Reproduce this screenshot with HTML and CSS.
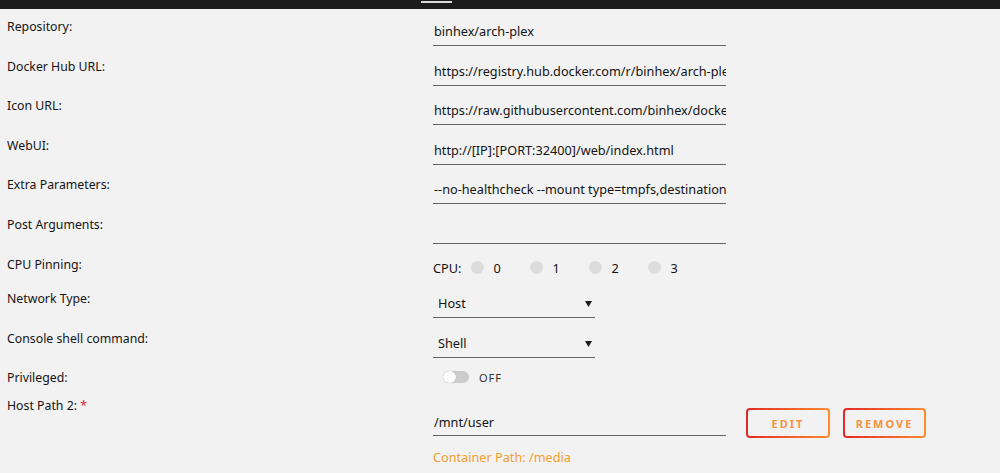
FILE: index.html
```html
<!DOCTYPE html>
<html lang="en">
  <head>
    <meta charset="UTF-8">
    <meta name="viewport" content="width=device-width, initial-scale=1.0">
    <title>Update Container</title>
    <link rel="stylesheet" href="styles.css">
  </head>
  <body>
    <div class="topbar"><span class="tab_mark"></span></div>

    <form class="settings">
      <div class="row">
        <div class="label">Repository:</div>
        <div class="field"><input class="text_input" type="text" value="binhex/arch-plex"></div>
      </div>
      <div class="row">
        <div class="label">Docker Hub URL:</div>
        <div class="field"><input class="text_input" type="text" value="https://registry.hub.docker.com/r/binhex/arch-plex/"></div>
      </div>
      <div class="row">
        <div class="label">Icon URL:</div>
        <div class="field"><input class="text_input" type="text" value="https://raw.githubusercontent.com/binhex/docker-templates/master/binhex/images/plex-icon.png"></div>
      </div>
      <div class="row">
        <div class="label">WebUI:</div>
        <div class="field"><input class="text_input" type="text" value="http://[IP]:[PORT:32400]/web/index.html"></div>
      </div>
      <div class="row">
        <div class="label">Extra Parameters:</div>
        <div class="field"><input class="text_input" type="text" value="--no-healthcheck --mount type=tmpfs,destination=/config/transcode"></div>
      </div>
      <div class="row">
        <div class="label">Post Arguments:</div>
        <div class="field"><input class="text_input" type="text" value=""></div>
      </div>
      <div class="row row_cpu">
        <div class="label">CPU Pinning:</div>
        <div class="field cpu_list">
          <span class="cpu_title">CPU:</span>
          <label class="cpu_opt"><span class="radio"></span>0</label>
          <label class="cpu_opt"><span class="radio"></span>1</label>
          <label class="cpu_opt"><span class="radio"></span>2</label>
          <label class="cpu_opt"><span class="radio"></span>3</label>
        </div>
      </div>
      <div class="row">
        <div class="label">Network Type:</div>
        <div class="field">
          <div class="select"><span>Host</span><svg width="7" height="7" viewBox="0 0 7 7"><path d="M0 1h7L3.5 7z" fill="#1c1c1c"/></svg></div>
        </div>
      </div>
      <div class="row">
        <div class="label">Console shell command:</div>
        <div class="field">
          <div class="select"><span>Shell</span><svg width="7" height="7" viewBox="0 0 7 7"><path d="M0 1h7L3.5 7z" fill="#1c1c1c"/></svg></div>
        </div>
      </div>
      <div class="row row_priv">
        <div class="label">Privileged:</div>
        <div class="field switch_line">
          <span class="switch"><span class="knob"></span></span>
          <span class="switch_text">OFF</span>
        </div>
      </div>
      <div class="row row_path">
        <div class="label">Host Path 2: <span class="required">*</span></div>
        <div class="field">
          <div class="path_line">
            <input class="text_input" type="text" value="/mnt/user">
            <button type="button" class="grad_btn btn_edit">EDIT</button>
            <button type="button" class="grad_btn btn_remove">REMOVE</button>
          </div>
          <div class="path_note">Container Path: /media</div>
        </div>
      </div>
    </form>
  </body>
</html>
```

FILE: styles.css
```css
html, body {
    margin: 0;
    padding: 0;
}
body {
    background: #f2f2f2;
    color: #141414;
    font-family: "Noto Sans", "Open Sans", sans-serif;
    font-size: 12.3px;
    overflow: hidden;
}
.topbar {
    height: 9px;
    background: #1c1c1c;
    position: relative;
}
.tab_mark {
    position: absolute;
    left: 421px;
    top: 1px;
    width: 31px;
    height: 2px;
    background: #d8d8d8;
}
.settings {
    padding-left: 7px;
}
.row {
    display: grid;
    grid-template-columns: 426px 1fr;
    height: 39.6px;
}
.row_cpu {
    height: 34.4px;
}
.row_priv {
    height: 28px;
}
.row_path {
    height: auto;
}
.label {
    padding-top: 9px;
    line-height: 18px;
}
.required {
    color: #e22828;
}
.field {
    padding-top: 8px;
}
.text_input {
    display: block;
    box-sizing: border-box;
    width: 293px;
    height: 29px;
    margin: 0;
    padding: 0 0 0 1px;
    border: none;
    border-bottom: 1px solid #666;
    background: transparent;
    color: #141414;
    font-family: inherit;
    font-size: 12.7px;
    outline: none;
}

/* cpu pinning */
.cpu_list {
    display: flex;
    align-items: center;
    padding-top: 12px;
    height: 18px;
    font-size: 12.7px;
}
.cpu_title {
    margin-right: 10px;
}
.cpu_opt {
    display: flex;
    align-items: center;
    gap: 9px;
    width: 59px;
}
.radio {
    width: 13px;
    height: 13px;
    border-radius: 50%;
    background: #dcdcdc;
}

/* dropdowns */
.select {
    box-sizing: border-box;
    width: 162px;
    height: 29px;
    display: flex;
    align-items: center;
    justify-content: space-between;
    padding: 1px 3px 0 5px;
    border-bottom: 1px solid #666;
    font-size: 12.7px;
}

/* switch */
.switch_line {
    display: flex;
    align-items: center;
    padding-top: 9px;
    padding-left: 10px;
    height: 16px;
}
.switch {
    position: relative;
    width: 26px;
    height: 12px;
    border-radius: 6px;
    background: #cccccc;
}
.knob {
    position: absolute;
    left: 0;
    top: 0;
    width: 13px;
    height: 12px;
    border-radius: 6px;
    background: #fdfdfd;
    box-shadow: 0 0 1px rgba(0, 0, 0, 0.3);
}
.switch_text {
    margin-left: 10px;
    font-size: 11px;
    letter-spacing: 1px;
    color: #333;
}

/* host path */
.row_path .field {
    padding-top: 20px;
}
.path_line {
    display: flex;
    align-items: flex-start;
}
.row_path .text_input {
    height: 28px;
}
.grad_btn {
    box-sizing: border-box;
    height: 30px;
    margin: 0 0 0 13px;
    padding: 0;
    border: 2px solid transparent;
    border-radius: 4px;
    background: linear-gradient(#f2f2f2, #f2f2f2) padding-box,
                linear-gradient(90deg, #e22828, #ff8c2f) border-box;
    color: #f8913f;
    font-family: inherit;
    font-size: 11px;
    font-weight: bold;
    letter-spacing: 2px;
    cursor: pointer;
}
.btn_edit {
    width: 84px;
    margin-left: 20px;
}
.btn_remove {
    width: 83px;
}
.path_note {
    margin-top: 10px;
    line-height: 18px;
    color: #f0a030;
    font-size: 12.7px;
}
```
